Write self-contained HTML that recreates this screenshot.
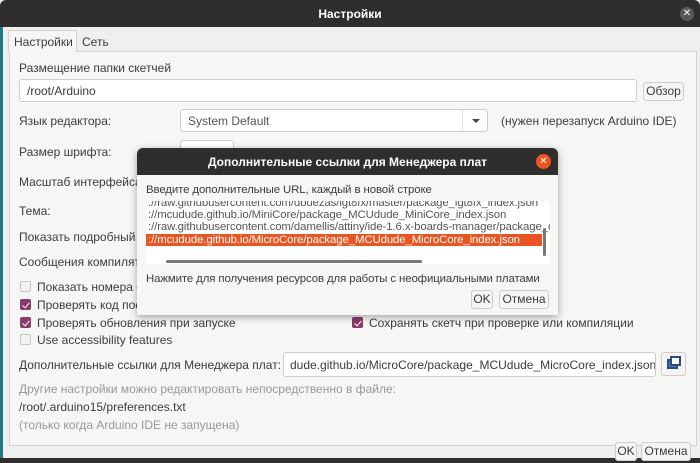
<!DOCTYPE html><html><head><meta charset="utf-8"><style>
*{box-sizing:border-box}
body{margin:0;width:700px;height:463px;overflow:hidden;background:#f0efee;font-family:"Liberation Sans","DejaVu Sans",sans-serif;font-size:12px;color:#3c3c3c;position:relative}
.a{position:absolute;white-space:nowrap}
.inp{position:absolute;background:#fff;border:1px solid #cfcdca;border-radius:3px}
.btn{position:absolute;background:#f6f5f4;border:1px solid #cfcdca;border-radius:3px;text-align:center;line-height:17px}
.cb{position:absolute;width:11px;height:11px;border:1px solid #c8c6c3;border-radius:2px;background:#f3f2f1}
.cb.on{background:#8a3b6b;border-color:#8a3b6b}
.cb.on:after{content:"";position:absolute;left:3px;top:1px;width:3px;height:6px;border:solid #fff;border-width:0 1.5px 1.5px 0;transform:rotate(40deg)}
.g{color:#9a9896}
.dl{font-size:11.4px;letter-spacing:-0.1px}
</style></head><body>
<div class="a" style="left:0;top:0;width:700px;height:27px;background:#2f2e2c;border-radius:6px 6px 0 0"></div>
<div class="a" style="left:0;top:7px;width:700px;text-align:center;color:#fff;font-weight:bold;font-size:12px">Настройки</div>
<div class="a" style="left:680px;top:7px;width:14px;height:14px;border-radius:50%;background:#5a5856;color:#fff;font-size:10px;line-height:14px;text-align:center">✕</div>
<div class="a" style="left:0;top:27px;width:3px;height:436px;background:#1f7a80"></div>
<div class="a" style="left:0;top:458px;width:700px;height:5px;background:#2f2e2c"></div>
<div class="a" style="left:9px;top:51px;width:688px;height:395px;border:1px solid #d4d2cf;background:#f6f6f5"></div>
<div class="a" style="left:8px;top:30px;width:69px;height:22px;border:1px solid #d4d2cf;border-bottom:none;background:#f6f6f5;padding:4px 0 0 5px">Настройки</div>
<div class="a" style="left:82px;top:35px">Сеть</div>
<div class="a" style="left:19px;top:61px">Размещение папки скетчей</div>
<div class="inp" style="left:19px;top:79px;width:618px;height:23px;padding:4px 7px">/root/Arduino</div>
<div class="btn" style="left:643px;top:82px;width:41px;height:19px">Обзор</div>
<div class="a" style="left:19px;top:114px">Язык редактора:</div>
<div class="inp" style="left:180px;top:109px;width:308px;height:23px;padding:4px 7px;color:#555">System Default</div>
<div class="a" style="left:462px;top:110px;width:1px;height:21px;background:#e0dedb"></div>
<div class="a" style="left:472px;top:119px;border:4px solid transparent;border-top:4px solid #444"></div>
<div class="a" style="left:501px;top:114px">(нужен перезапуск Arduino IDE)</div>
<div class="a" style="left:19px;top:145px">Размер шрифта:</div>
<div class="inp" style="left:180px;top:140px;width:54px;height:23px"></div>
<div class="a" style="left:19px;top:175px">Масштаб интерфейса:</div>
<div class="a" style="left:19px;top:204px">Тема:</div>
<div class="a" style="left:19px;top:230px">Показать подробный вывод:</div>
<div class="a" style="left:19px;top:255px">Сообщения компилятора:</div>
<div class="cb" style="left:20px;top:281px"></div><div class="a" style="left:37px;top:280px">Показать номера строк</div>
<div class="cb on" style="left:20px;top:299px"></div><div class="a" style="left:37px;top:298px">Проверять код после загрузки</div>
<div class="cb on" style="left:20px;top:317px"></div><div class="a" style="left:37px;top:316px">Проверять обновления при запуске</div>
<div class="cb on" style="left:352px;top:317px"></div><div class="a" style="left:369px;top:316px">Сохранять скетч при проверке или компиляции</div>
<div class="cb" style="left:20px;top:334px"></div><div class="a" style="left:37px;top:333px">Use accessibility features</div>
<div class="a" style="left:19px;top:358px">Дополнительные ссылки для Менеджера плат:</div>
<div class="inp" style="left:283px;top:352px;width:373px;height:25px;padding:5px 6px;overflow:hidden">dude.github.io/MicroCore/package_MCUdude_MicroCore_index.json</div>
<div class="btn" style="left:661px;top:352px;width:25px;height:24px"></div>
<div class="a" style="left:667px;top:359px;width:11px;height:10px;border:2px solid #2a4d80;background:#5c7fb0"></div>
<div class="a" style="left:670px;top:356px;width:11px;height:10px;border:2px solid #2a4d80;background:#fff"></div>
<div class="a g" style="left:19px;top:382px">Другие настройки можно редактировать непосредственно в файле:</div>
<div class="a" style="left:19px;top:400px">/root/.arduino15/preferences.txt</div>
<div class="a g" style="left:19px;top:418px">(только когда Arduino IDE не запущена)</div>
<div class="btn" style="left:615px;top:442px;width:22px;height:19px">OK</div>
<div class="btn" style="left:641px;top:442px;width:50px;height:19px">Отмена</div>

<div class="a" style="left:137px;top:148px;width:421px;height:167px;background:#f6f6f5;border-radius:6px 6px 0 0;box-shadow:0 2px 8px rgba(0,0,0,.35);overflow:hidden">
<div class="a" style="left:0;top:0;width:421px;height:27px;background:#2f2e2c"></div>
<div class="a" style="left:0;top:7px;width:421px;text-align:center;color:#fff;font-weight:bold">Дополнительные ссылки для Менеджера плат</div>
<div class="a" style="left:399px;top:6px;width:15px;height:15px;border-radius:50%;background:#e95420;color:#fff;font-size:10px;line-height:15px;text-align:center">✕</div>
<div class="a dl" style="left:9px;top:36px">Введите дополнительные URL, каждый в новой строке</div>
<div class="a dl" style="left:9px;top:53px;width:404px;height:63px;background:#fff;overflow:hidden;line-height:12px;color:#555">
<div class="a" style="left:2px;top:-4px">://raw.githubusercontent.com/dbuezas/lgt8fx/master/package_lgt8fx_index.json</div>
<div class="a" style="left:2px;top:8px">://mcudude.github.io/MiniCore/package_MCUdude_MiniCore_index.json</div>
<div class="a" style="left:2px;top:20px">://raw.githubusercontent.com/damellis/attiny/ide-1.6.x-boards-manager/package_damellis_attiny_index.json</div>
<div class="a" style="left:0;top:33px;width:396px;height:12px;background:#e95420"></div>
<div class="a" style="left:2px;top:33px;color:#fff">://mcudude.github.io/MicroCore/package_MCUdude_MicroCore_index.json</div>
<div class="a" style="left:20px;top:59px;width:256px;height:3px;border-radius:2px;background:#7a7876"></div>
<div class="a" style="left:397px;top:27px;width:3px;height:28px;border-radius:2px;background:#7a7876"></div>
</div>
<div class="a dl" style="left:9px;top:125px">Нажмите для получения ресурсов для работы с неофициальными платами</div>
<div class="btn" style="left:334px;top:142px;width:22px;height:19px">OK</div>
<div class="btn" style="left:362px;top:142px;width:50px;height:19px">Отмена</div>
</div>
</body></html>
